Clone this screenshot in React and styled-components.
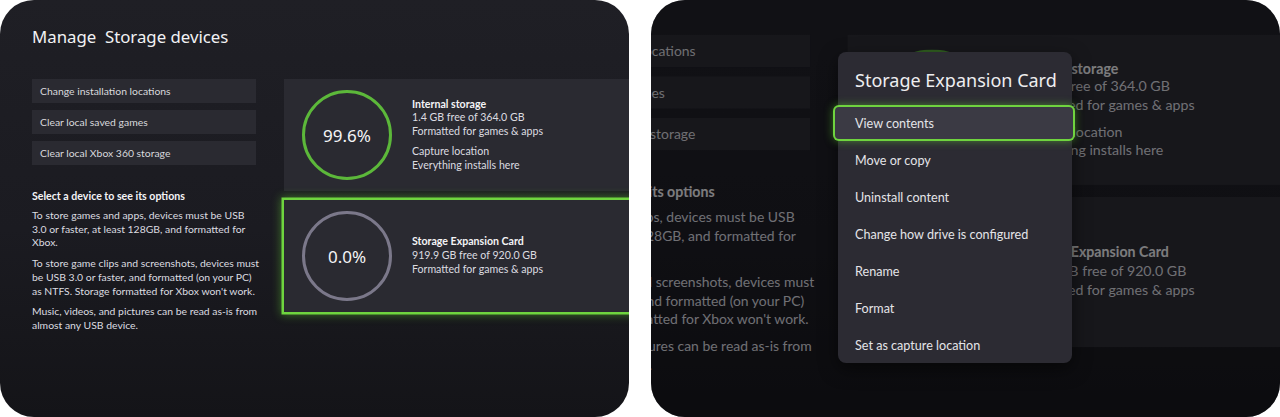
import React from 'react';
import styled, { createGlobalStyle, css } from 'styled-components';

const GlobalStyle = createGlobalStyle`
  html, body {
    margin: 0;
    padding: 0;
    background: #ffffff;
  }
  body {
    font-family: Lato, 'Noto Sans', sans-serif;
  }
`;

const Page = styled.div`
  display: flex;
  gap: 22px;
  width: 1280px;
  height: 417px;
  overflow: hidden;
`;

const Panel = styled.div`
  position: relative;
  flex: 0 0 629px;
  height: 417px;
  border-radius: 34px;
  overflow: hidden;
  background: linear-gradient(180deg, #1f1f25 0%, #1b1b21 55%, #141418 100%);
`;

const Screen = styled.div`
  width: 720px;
  height: 417px;
  box-sizing: border-box;
  padding: 25px 0 0 32px;
  color: #e2e2e5;
`;

const Title = styled.h1`
  margin: 0;
  font-family: 'Noto Sans', sans-serif;
  font-size: 16.8px;
  font-weight: 400;
  line-height: 24px;
  white-space: pre;
  color: #f2f2f4;
`;

const Body = styled.div`
  display: grid;
  grid-template-columns: 224px 1fr;
  column-gap: 28px;
  margin-top: 30px;
`;

const Column = styled.div`
  display: flex;
  flex-direction: column;
`;

const Actions = styled.div`
  display: flex;
  flex-direction: column;
  gap: 7px;
`;

const ActionButton = styled.div`
  height: 24px;
  display: flex;
  align-items: center;
  padding-left: 8px;
  background: #2a2a31;
  font-size: 10.4px;
  color: #d9d9dd;
`;

const Heading = styled.h2`
  margin: 24px 0 6px;
  font-size: 10.6px;
  line-height: 14px;
  font-weight: 700;
  color: #f4f4f6;
`;

const Para = styled.p`
  width: 228px;
  margin: 0 0 7px;
  font-size: 10.4px;
  line-height: 13.7px;
  color: #dcdce0;
`;

const Cards = styled.div`
  display: flex;
  flex-direction: column;
  gap: 9px;
`;

const Card = styled.div`
  height: 112px;
  display: flex;
  align-items: center;
  gap: 20px;
  padding-left: 18px;
  background: #2a2a31;
  ${p =>
    p.$focused &&
    css`
      box-shadow: 0 0 0 2.5px #6fd43f, 0 0 9px 3px rgba(104, 214, 52, 0.45);
    `}
`;

const Ring = styled.div`
  position: relative;
  width: 90px;
  height: 90px;
  display: flex;
  align-items: center;
  justify-content: center;
  font-family: 'Noto Sans', sans-serif;
  font-size: 17px;
  color: #f4f4f6;
  > svg {
    position: absolute;
    inset: 0;
  }
`;

const Info = styled.div`
  display: flex;
  flex-direction: column;
  gap: 6px;
  font-size: 10.6px;
  line-height: 13.7px;
  color: #dcdce0;
`;

const InfoGroup = styled.div`
  display: flex;
  flex-direction: column;
`;

const InfoName = styled.span`
  font-weight: 700;
  color: #f4f4f6;
`;

const Zoomed = styled.div`
  transform-origin: 0 0;
  transform: translate(-184px, -71px) scale(1.34);
`;

const Dim = styled.div`
  position: absolute;
  inset: 0;
  background: rgba(4, 4, 6, 0.5);
`;

const Popup = styled.div`
  position: absolute;
  left: 187px;
  top: 52px;
  width: 234px;
  height: 311px;
  box-sizing: border-box;
  padding-top: 16px;
  border-radius: 8px;
  background: #2c2b33;
  box-shadow: 0 6px 18px rgba(0, 0, 0, 0.5);
`;

const PopupTitle = styled.div`
  padding-left: 17px;
  margin-bottom: 15px;
  font-family: 'Noto Sans', sans-serif;
  font-size: 18px;
  line-height: 24px;
  color: #eeeef0;
`;

const Menu = styled.ul`
  list-style: none;
  margin: 0 -1px 0 -3px;
  padding: 0;
  display: flex;
  flex-direction: column;
  gap: 5px;
`;

const MenuItem = styled.li`
  height: 32px;
  display: flex;
  align-items: center;
  padding-left: 20px;
  border-radius: 4px;
  font-size: 12.6px;
  color: #e4e4e8;
  ${p =>
    p.$active &&
    css`
      background: #3b3a44;
      box-shadow: 0 0 0 2px #6fd43f, 0 0 9px 2px rgba(104, 214, 52, 0.5);
    `}
`;

const devices = [
  {
    name: 'Internal storage',
    used: '99.6%',
    ring: '#5cb83a',
    lines: ['1.4 GB free of 364.0 GB', 'Formatted for games & apps'],
    extra: ['Capture location', 'Everything installs here']
  },
  {
    name: 'Storage Expansion Card',
    used: '0.0%',
    ring: '#7b788a',
    lines: ['919.9 GB free of 920.0 GB', 'Formatted for games & apps']
  }
];

const menuItems = [
  'View contents',
  'Move or copy',
  'Uninstall content',
  'Change how drive is configured',
  'Rename',
  'Format',
  'Set as capture location'
];

function UsageRing({ value, color }) {
  return (
    <Ring>
      <svg width="90" height="90" viewBox="0 0 90 90">
        <circle cx="45" cy="45" r="43.5" fill="none" stroke={color} strokeWidth="3" />
      </svg>
      {value}
    </Ring>
  );
}

function StorageScreen({ focusCard }) {
  return (
    <Screen>
      <Title>{'Manage  Storage devices'}</Title>
      <Body>
        <Column>
          <Actions>
            <ActionButton>Change installation locations</ActionButton>
            <ActionButton>Clear local saved games</ActionButton>
            <ActionButton>Clear local Xbox 360 storage</ActionButton>
          </Actions>
          <Heading>Select a device to see its options</Heading>
          <Para>
            To store games and apps, devices must be USB 3.0 or faster, at least 128GB, and
            formatted for Xbox.
          </Para>
          <Para>
            To store game clips and screenshots, devices must be USB 3.0 or faster, and
            formatted (on your PC) as NTFS. Storage formatted for Xbox won't work.
          </Para>
          <Para>Music, videos, and pictures can be read as-is from almost any USB device.</Para>
        </Column>
        <Cards>
          {devices.map((d, i) => (
            <Card key={d.name} $focused={focusCard && i === 1}>
              <UsageRing value={d.used} color={d.ring} />
              <Info>
                <InfoGroup>
                  <InfoName>{d.name}</InfoName>
                  {d.lines.map(l => (
                    <span key={l}>{l}</span>
                  ))}
                </InfoGroup>
                {d.extra && (
                  <InfoGroup>
                    {d.extra.map(l => (
                      <span key={l}>{l}</span>
                    ))}
                  </InfoGroup>
                )}
              </Info>
            </Card>
          ))}
        </Cards>
      </Body>
    </Screen>
  );
}

export default function App() {
  return (
    <>
      <GlobalStyle />
      <Page>
        <Panel>
          <StorageScreen focusCard />
        </Panel>
        <Panel>
          <Zoomed>
            <StorageScreen />
          </Zoomed>
          <Dim />
          <Popup>
            <PopupTitle>Storage Expansion Card</PopupTitle>
            <Menu>
              {menuItems.map((m, i) => (
                <MenuItem key={m} $active={i === 0}>
                  {m}
                </MenuItem>
              ))}
            </Menu>
          </Popup>
        </Panel>
      </Page>
    </>
  );
}
